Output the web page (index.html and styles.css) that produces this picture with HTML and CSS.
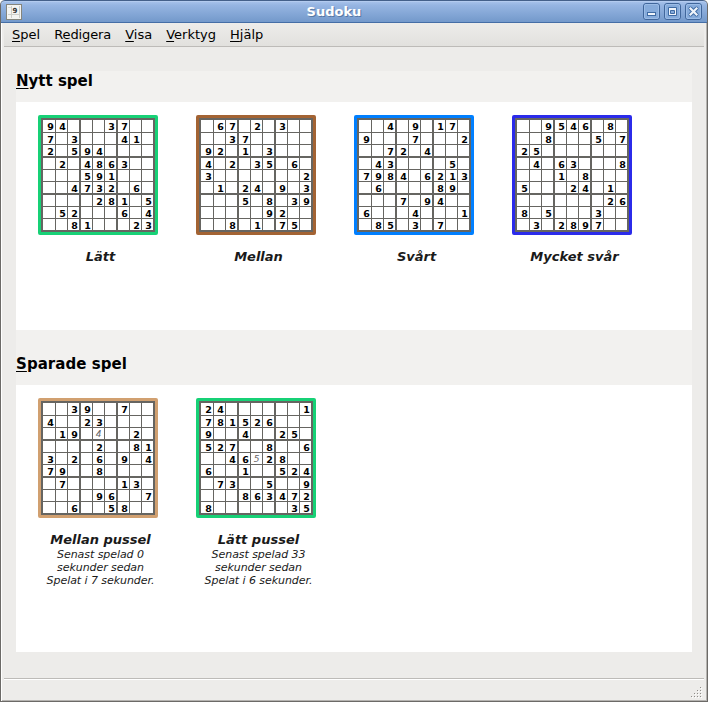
FILE: index.html
```html
<!DOCTYPE html>
<html lang="sv">
<head>
<meta charset="utf-8">
<title>Sudoku</title>
<link rel="stylesheet" href="styles.css">
</head>
<body>
<div class="window">
  <header class="titlebar">
    <svg class="app-icon" width="16" height="16" viewBox="0 0 16 16" shape-rendering="crispEdges">
      <rect x=".5" y=".5" width="15" height="15" fill="#f4f4f2" stroke="#85857d"/>
      <path d="M5.5 2v12M13.5 2v12M2 10.5h12" stroke="#cfcfca" fill="none"/>
      <path d="M2 3.5h3" stroke="#deded9"/>
      <text x="6.500" y="9" class="app-digit">9</text>
    </svg>
    <h1 class="title">Sudoku</h1>
    <div class="controls">
      <svg width="17" height="17" viewBox="0 0 17 17"><use href="#frame"/><rect x="4.500" y="9.500" width="8" height="3" fill="#f0f4fa" stroke="#3f6ba3"/></svg>
      <svg width="17" height="17" viewBox="0 0 17 17"><use href="#frame"/><path d="M4.500 4.500h8v8h-8zM6.500 7.500h4v3h-4z" fill="#f0f4fa" fill-rule="evenodd" stroke="#3f6ba3"/></svg>
      <svg width="17" height="17" viewBox="0 0 17 17"><use href="#frame"/><path d="M5.500 5.500l6 6M11.500 5.500l-6 6" stroke="#3f6ba3" stroke-width="4" stroke-linecap="round"/><path d="M5.500 5.500l6 6M11.500 5.500l-6 6" stroke="#f0f4fa" stroke-width="2.200" stroke-linecap="square"/></svg>
    </div>
    <svg class="defs" width="0" height="0"><defs><g id="frame"><rect x=".5" y=".5" width="16" height="16" rx="2.500" fill="#86abdb" stroke="#40669b"/><rect x="1.500" y="1.500" width="14" height="14" rx="1.500" fill="none" stroke="#9bbce6"/></g></defs></svg>
  </header>
  <nav class="menubar">
    <span><u>S</u>pel</span><span class="menu-edit">R<u>e</u>digera</span><span><u>V</u>isa</span><span><u>V</u>erktyg</span><span><u>H</u>jälp</span>
  </nav>
  <main class="content">
    <section>
      <h2 class="heading"><u>N</u>ytt spel</h2>
      <div class="list list-new">
        <figure class="game"><div class="board easy" data-cells="94...37.. 7.3...41. 2.594.... .2.4863.. ...591... ..4732.6. ....281.5 .52...6.4 ..81...23"></div><figcaption>Lätt</figcaption></figure>
        <figure class="game"><div class="board medium" data-cells=".67.2.3.. ..37..... 92.1.3... 4.2.35.6. 3.......2 .1.24.9.3 ...5.8.39 .....92.. ..8.1.75."></div><figcaption>Mellan</figcaption></figure>
        <figure class="game"><div class="board hard" data-cells="..4.9.17. 9...7...2 ..72.4... .43....5. 7984.6213 .6....89. ...7.94.. 6...4...1 .85.3.7.."></div><figcaption>Svårt</figcaption></figure>
        <figure class="game"><div class="board expert" data-cells="..9546.8. ..8...5.7 25....... .4.63...8 ...1.8... 5...24.1. .......26 8.5...3.. .3.2897.."></div><figcaption>Mycket svår</figcaption></figure>
      </div>
    </section>
    <section>
      <h2 class="heading heading-saved"><u>S</u>parade spel</h2>
      <div class="list list-saved">
        <figure class="game"><div class="board medium-saved" data-guess="22" data-cells="..39..7.. 4..23.... .19.4..2. ....2..81 3.2.6.9.4 79..8.... .7....13. ....96..7 ..6..58.."></div><figcaption>Mellan pussel<small>Senast spelad 0<br>sekunder sedan<br>Spelat i 7 sekunder.</small></figcaption></figure>
        <figure class="game"><div class="board easy" data-guess="40" data-cells="24......1 781526... 9..4..25. 527..8..6 ..46528.. 6..1..524 .73..5..9 ...863472 8......35"></div><figcaption>Lätt pussel<small>Senast spelad 33<br>sekunder sedan<br>Spelat i 6 sekunder.</small></figcaption></figure>
      </div>
    </section>
  </main>
  <footer class="statusbar">
    <svg width="12" height="12" viewBox="0 0 12 12" shape-rendering="crispEdges">
      <path d="M10 1h1v1h-1zM7 4h1v1h-1zM10 4h1v1h-1zM4 7h1v1h-1zM7 7h1v1h-1zM10 7h1v1h-1zM1 10h1v1h-1zM4 10h1v1h-1zM7 10h1v1h-1zM10 10h1v1h-1z" fill="#fff"/>
      <path d="M9 0h1v1h-1zM6 3h1v1h-1zM9 3h1v1h-1zM3 6h1v1h-1zM6 6h1v1h-1zM9 6h1v1h-1zM0 9h1v1h-1zM3 9h1v1h-1zM6 9h1v1h-1zM9 9h1v1h-1z" fill="#8e8c88"/>
    </svg>
  </footer>
</div>
<script src="boards.js"></script>
</body>
</html>
```
FILE: styles.css
```css
* { box-sizing: border-box; }
body {
  margin: 0;
  background: #fff;
  font-family: "DejaVu Sans", sans-serif;
  font-size: 13px;
  color: #000;
}
.window {
  display: flex;
  flex-direction: column;
  width: 708px;
  height: 702px;
  background: #edecea;
  border: 1px solid #6c6a67;
  border-top: 0;
  border-radius: 5px 5px 0 0;
  box-shadow: inset 1px 0 #fff, inset -1px -1px #b5b3b0;
  overflow: hidden;
}
.titlebar {
  display: grid;
  grid-template-columns: 20px 1fr 60px;
  align-items: center;
  height: 23px;
  flex: none;
  margin: 0 -1px;
  padding: 0 6px;
  background: linear-gradient(#a9c4ec, #96b5e2 20%, #7399cb);
  border: 1px solid #44608a;
  border-bottom-color: #456ea6;
  border-radius: 5px 5px 0 0;
  box-shadow: inset 0 1px #b3cbef;
}
.app-icon { margin-left: -1px; }
.app-digit { font: bold 7px "DejaVu Sans", sans-serif; fill: #333; }
.title {
  margin: 0;
  text-align: center;
  font-size: 13px;
  line-height: 20px;
  color: #fff;
  text-shadow: 1px 1px #5878a4;
}
.controls { display: flex; gap: 4px; justify-content: flex-end; margin-right: -1px; }
.controls svg { flex: none; }
.defs { position: absolute; }
.menubar {
  display: flex;
  gap: 14px;
  flex: none;
  height: 24px;
  margin: 0 3px;
  padding-left: 8px;
  line-height: 23px;
  background: linear-gradient(#edecea, #e2e1de);
  border-bottom: 1px solid #bdbbb8;
}
.menu-edit { letter-spacing: -0.1px; }
u { text-underline-offset: 2px; text-decoration-thickness: 1px; text-decoration-skip-ink: none; }
.content { flex: none; width: 676px; margin: 24px 0 0 15px; }
.heading {
  margin: 0;
  height: 31px;
  background: #f2f1ef;
  font-size: 15px;
  line-height: 20px;
}
.heading-saved { height: 55px; padding-top: 24px; letter-spacing: 0.06px; }
.list {
  display: flex;
  gap: 38px;
  padding: 13px 22px 0;
  background: #fff;
}
.list-new { height: 228px; }
.list-saved { height: 267px; }
.game { margin: 0; width: 120px; text-align: center; }
.board {
  display: grid;
  grid-template: 12px 11px 11px 12px 11px 11px 12px 11px 11px / 12px 11px 11px 12px 11px 11px 12px 11px 11px;
  gap: 1px;
  width: 120px;
  height: 120px;
  padding: 2px;
  border: 3px solid;
  border-radius: 2px;
  background: #666561;
}
.easy { border-color: #17d176; }
.medium { border-color: #a36333; }
.medium-saved { border-color: #d1a070; }
.hard { border-color: #007fff; }
.expert { border-color: #2b2bea; }
.cell {
  background: #fff;
  color: #000;
  font-size: 9.5px;
  font-weight: bold;
  line-height: 13px;
  height: 100%;
  padding-left: 2px;
}
.cell-left { margin-left: 1px; }
.cell-top { margin-top: 1px; }
.cell-first { padding-left: 3px; }
.cell-guess { padding-left: 0; font-size: 9px; font-weight: normal; font-style: italic; color: #666; }
.cell-top { height: 11px; }
figcaption {
  margin: 14px -12px 0 -7px;
  font-weight: bold;
  font-style: italic;
  line-height: 16px;
  color: #1a1a1a;
}
figcaption small {
  display: block;
  font-size: 11px;
  font-weight: normal;
  line-height: 13px;
  letter-spacing: -0.06px;
}
.statusbar {
  display: flex;
  justify-content: flex-end;
  margin: 26px 3px 0;
  padding: 8px 1px 0 0;
  height: 22px;
  border-top: 1px solid #bdbbb8;
  box-shadow: inset 0 1px #fff;
}
.statusbar svg { flex: none; }
```
FILE: boards.js
```js
// Fill each board with its 81 cells; a dot is an empty cell.
document.querySelectorAll('.board').forEach(function (board) {
  const digits = board.dataset.cells.replace(/ /g, '');
  const guess = Number(board.dataset.guess || -1);
  [...digits].forEach(function (digit, i) {
    const cell = document.createElement('span');
    const col = i % 9;
    const row = Math.floor(i / 9);
    cell.className = 'cell';
    if (col === 0) cell.classList.add('cell-first');
    if (col === 3 || col === 6) cell.classList.add('cell-left');
    if (row === 3 || row === 6) cell.classList.add('cell-top');
    if (i === guess) cell.classList.add('cell-guess');
    if (digit !== '.') cell.textContent = digit;
    board.appendChild(cell);
  });
});
```
